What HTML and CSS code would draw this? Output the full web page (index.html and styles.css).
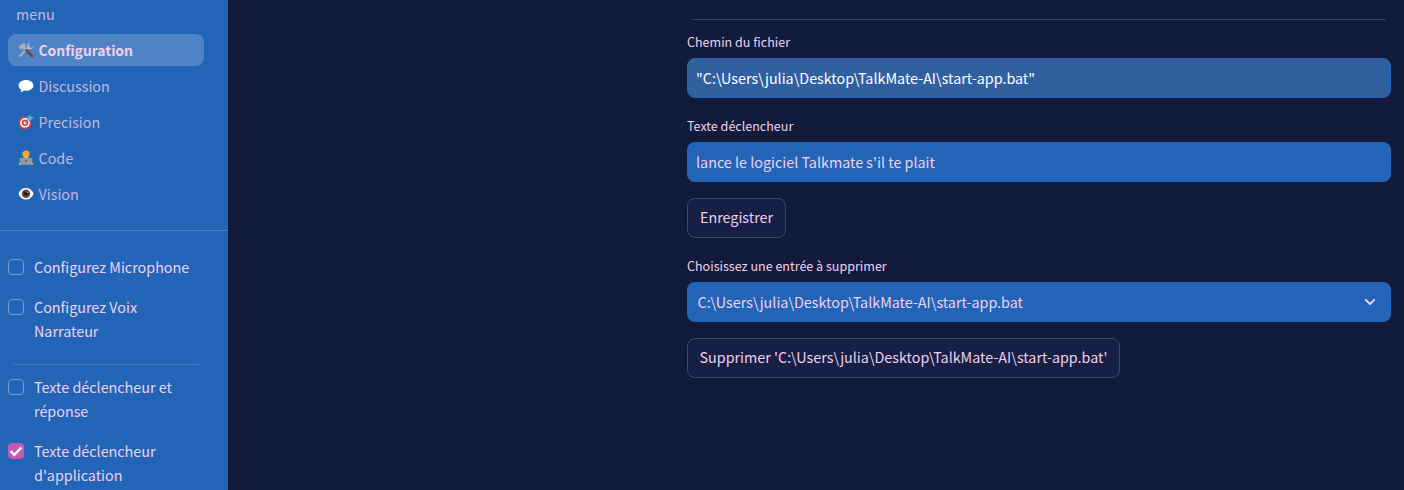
FILE: index.html
```html
<!DOCTYPE html>
<html lang="fr">
<head>
<meta charset="utf-8">
<title>TalkMate</title>
<link rel="stylesheet" href="styles.css">
</head>
<body>
<div class="app">
  <aside class="sidebar">
    <div class="menu-title">menu</div>
    <nav class="nav">
      <a class="nav-item active">
        <svg class="icon" viewBox="0 0 16 16"><path d="M2.2 13.8L11 5" stroke="#a6b3bf" stroke-width="2.2" stroke-linecap="round"/><path d="M10.8 1.2C9 2 8.500 4 9.300 5.500L11 7.200C13 7.500 15 6.500 15.200 4.600L13 6L10.800 5.200L10.200 3.300L12 1.200Z" fill="#b9c3cd"/><path d="M7.500 7.500L14 14" stroke="#7b4238" stroke-width="2.800" stroke-linecap="round"/><path d="M.8 5.200L2 3.400L5.600 1.300L8.200 2.200L6.700 3.600L8.500 6.800L6.500 8.700L4 6.200L2.600 7.400Z" fill="#aab0b8"/></svg>
        <span>Configuration</span></a>
      <a class="nav-item">
        <svg class="icon" viewBox="0 0 16 16"><path d="M8 2C3.900 2 .6 4.300 .6 7.400C.6 9.200 1.600 10.700 3.300 11.600C3.300 12.700 2.800 13.400 2.300 14C4 14 5.300 13.300 6.200 12.600C11 13.200 15.400 11 15.400 7.400C15.400 4.300 12.100 2 8 2Z" fill="#fff"/></svg>
        <span>Discussion</span></a>
      <a class="nav-item">
        <svg class="icon" viewBox="0 0 16 16"><circle cx="7" cy="8.800" r="6.400" fill="#e93b3b"/><circle cx="7" cy="8.800" r="4.800" fill="#fff"/><circle cx="7" cy="8.800" r="3.300" fill="#e93b3b"/><circle cx="7" cy="8.800" r="1.500" fill="#fff"/><path d="M7 8.800L12 4" stroke="#2e9bdd" stroke-width="1.300"/><path d="M9.600 6.400L9.300 3.400L12.500 .3L13 2.700L15.500 3.300L12.500 6.500Z" fill="#45b9f4"/></svg>
        <span>Precision</span></a>
      <a class="nav-item">
        <svg class="icon" viewBox="0 0 16 16"><path d="M.8 15L2.300 10.500C4 7.500 12 7.500 13.700 10.500L15.200 15Z" fill="#d8c05f"/><circle cx="8" cy="4" r="3.600" fill="#f7a723"/><path d="M5.800 5.500H10.200V8.500H5.800Z" fill="#efb544"/><rect x="1.900" y="8" width="12.200" height="6.200" rx=".6" fill="#949aa3"/><rect x="2.400" y="14" width="11.200" height="1" fill="#858b94"/><circle cx="8" cy="11.200" r="1.100" fill="#64656c"/></svg>
        <span>Code</span></a>
      <a class="nav-item">
        <svg class="icon" viewBox="0 0 16 16"><path d="M.4 7.800C2 4 4.700 2 8 2S14 4 15.600 7.800C14 11.600 11.300 13.600 8 13.600S2 11.600 .4 7.800Z" fill="#fff"/><circle cx="8" cy="7.700" r="4.300" fill="#75422e"/><circle cx="8" cy="7.700" r="2" fill="#17161a"/><circle cx="9.300" cy="6.200" r=".6" fill="#ccc"/></svg>
        <span>Vision</span></a>
    </nav>
    <div class="options">
      <label class="check"><span class="box"></span><span class="caption">Configurez Microphone</span></label>
      <label class="check"><span class="box"></span><span class="caption">Configurez Voix<br>Narrateur</span></label>
      <div class="rule"></div>
      <label class="check"><span class="box"></span><span class="caption">Texte déclencheur et<br>réponse</span></label>
      <label class="check"><span class="box checked"><svg viewBox="0 0 16 16"><path d="M2.600 8.100L6.300 11.800L13.400 4.700" fill="none" stroke="#fff" stroke-width="2.500"/></svg></span><span class="caption">Texte déclencheur<br>d'application</span></label>
    </div>
  </aside>
  <main class="main">
    <div class="main-rule"></div>
    <div class="label">Chemin du fichier</div>
    <div class="field muted"><span>"C:\Users\julia\Desktop\TalkMate-AI\start-app.bat"</span></div>
    <div class="label">Texte déclencheur</div>
    <div class="field"><span>lance le logiciel Talkmate s'il te plait</span></div>
    <button class="button save">Enregistrer</button>
    <div class="label">Choisissez une entrée à supprimer</div>
    <div class="field select"><span>C:\Users\julia\Desktop\TalkMate-AI\start-app.bat</span>
      <svg class="chevron" viewBox="0 0 12 8"><path d="M1.800 1.800L6 6L10.200 1.800" fill="none" stroke="#f3d1eb" stroke-width="1.900" stroke-linecap="round" stroke-linejoin="round"/></svg></div>
    <button class="button delete">Supprimer 'C:\Users\julia\Desktop\TalkMate-AI\start-app.bat'</button>
  </main>
</div>
</body>
</html>
```
FILE: styles.css
```css
* { box-sizing: border-box; }
body {
  margin: 0;
  background: #121b3b;
  color: #f0d0ee;
  font: 14.33px/24px "Noto Sans CJK SC", "Noto Sans", sans-serif;
}
.app { display: flex; height: 490px; overflow: hidden; }
.sidebar { width: 228px; flex: none; background: #2265b6; white-space: nowrap; }
.menu-title { height: 34px; padding: 2px 16px 0; color: #c3b6df; }
.nav { display: grid; gap: 4px; padding: 0 24px 20px 8px; }
.nav-item {
  display: flex;
  align-items: center;
  gap: 4.5px;
  height: 32px;
  padding-left: 10px;
  border-radius: 8px;
  color: #c3b6df;
}
.nav-item.active { background: #4f83c5; color: #f0d0ee; font-weight: 700; }
.nav-item.active span { font-size: 13.9px; }
.icon { width: 16px; height: 16px; flex: none; }
.options {
  display: flex;
  flex-direction: column;
  gap: 16px;
  padding: 25px 29px 0 8px;
  border-top: 1px solid #4d80c6;
}
.check { display: flex; gap: 10px; margin-top: -1px; margin-bottom: 1px; }
.box {
  width: 16px;
  height: 16px;
  flex: none;
  margin-top: 4px;
  border: 1px solid #7399d3;
  border-radius: 4px;
}
.box.checked { border: 0; background: #c45ab3; }
.box svg { display: block; width: 16px; height: 16px; }
.rule { height: 1px; margin: 4px 0 -5px 5px; background: #4d80c0; }
.main { width: 704px; margin-left: 459px; padding-top: 19px; }
.main-rule { height: 1px; margin: 0 5px 10px; background: #3a4060; }
.label { height: 28px; font-size: 12.54px; line-height: 24px; }
.field {
  display: flex;
  align-items: center;
  height: 40px;
  margin-bottom: 16px;
  padding-left: 9px;
  border-radius: 8px;
  background: #2265b6;
}
.field.muted { background: #3160a1; color: #fff; border: 1px solid #2265b6; padding-left: 8px; }
.select { justify-content: space-between; padding: 0 15px 0 10.5px; }
.chevron { width: 12px; height: 8px; }
.button {
  display: block;
  height: 40px;
  margin: 0 0 16px;
  padding: 0 0 2px;
  border: 1px solid #41466a;
  border-radius: 8px;
  background: #171f45;
  color: inherit;
  font: inherit;
  white-space: nowrap;
}
.save { width: 99px; }
.delete { width: 433px; }
```
